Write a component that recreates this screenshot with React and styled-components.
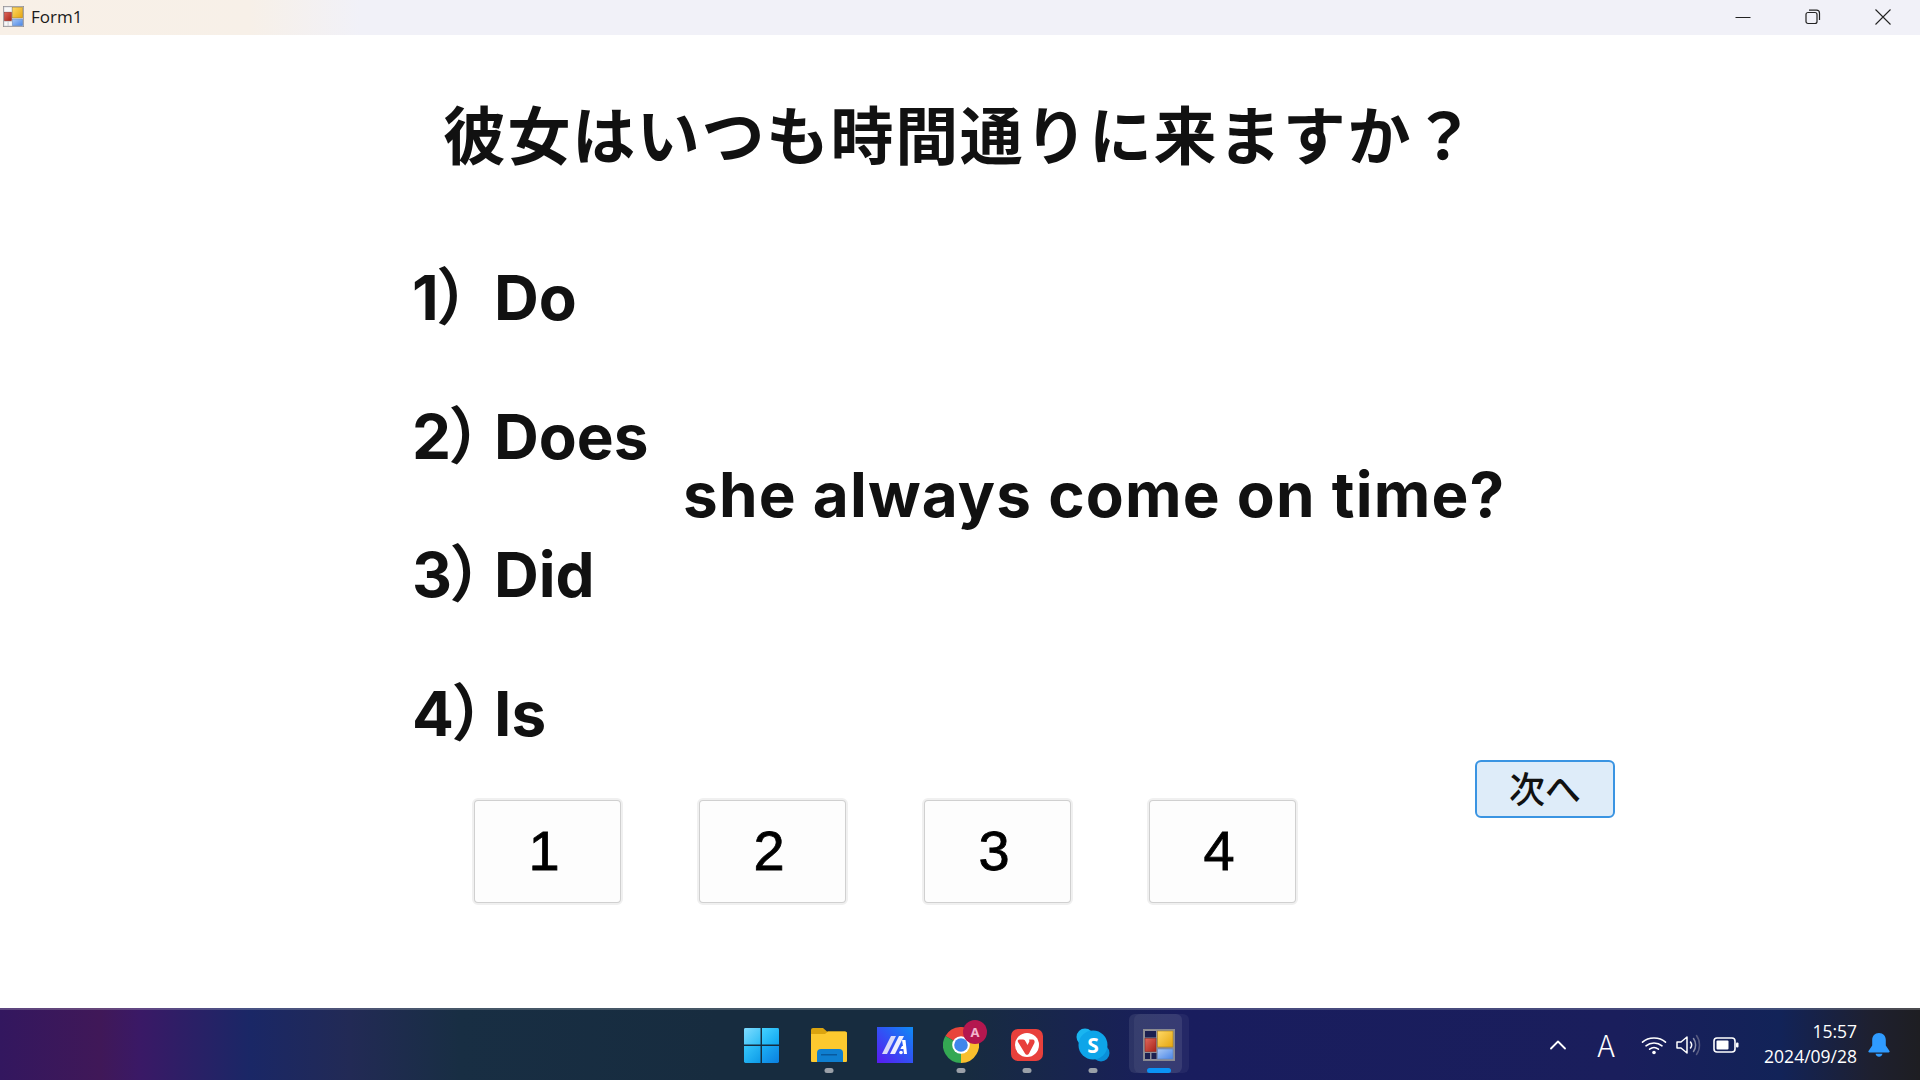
import React from "react"
import styled, { createGlobalStyle } from "styled-components"

const GlobalStyle = createGlobalStyle`
  html, body {
    margin: 0;
    padding: 0;
    background: #fff;
  }
  body {
    font-family: "Noto Sans CJK JP", "Noto Sans", sans-serif;
    overflow: hidden;
  }
`

const Screen = styled.div`
  width: 1920px;
  height: 1080px;
  display: flex;
  flex-direction: column;
  overflow: hidden;
`

const TitleBar = styled.div`
  height: 35px;
  flex: none;
  box-sizing: border-box;
  padding: 0 0 2px 3px;
  display: flex;
  align-items: center;
  background: linear-gradient(90deg, #f8f0e7 0, #f7f0e8 250px, #f1f1f8 360px, #f1f1f8 100%);
`
const TitleText = styled.span`
  margin-left: 7px;
  font-family: "Open Sans", sans-serif;
  font-size: 17px;
  color: #1a1a1a;
`
const WindowControls = styled.div`
  margin-left: auto;
  display: flex;
  align-items: center;
  padding-right: 2px;
`
const ControlButton = styled.div`
  width: 70px;
  height: 33px;
  display: flex;
  align-items: center;
  justify-content: center;
`

const FormBody = styled.main`
  flex: 1;
  display: flex;
  flex-direction: column;
  background: #fff;
  color: #111;
`
const Question = styled.h1`
  margin: 47px 0 0 443px;
  height: 100px;
  font-size: 63px;
  line-height: 100px;
  letter-spacing: 1.6px;
  font-weight: 700;
  white-space: nowrap;
`
const QuestionArea = styled.div`
  margin: 76px 0 0 412px;
  display: flex;
  align-items: center;
`
const OptionList = styled.ol`
  list-style: none;
  margin: 0;
  padding: 0;
  width: 271px;
  display: flex;
  flex-direction: column;
  gap: 58.5px;
`
const Option = styled.li`
  height: 80px;
  font-family: "Inter", "Noto Sans CJK JP", sans-serif;
  font-size: 62px;
  line-height: 80px;
  font-weight: 700;
  white-space: nowrap;
`
const Paren = styled.span`
  display: inline-block;
  width: 82px;
  font-feature-settings: "palt";
`
const Sentence = styled.div`
  margin-bottom: 22px;
  font-family: "Inter", sans-serif;
  font-size: 62px;
  font-weight: 700;
  line-height: 80px;
  letter-spacing: 1.2px;
  white-space: nowrap;
`
const ButtonRow = styled.div`
  margin: 6px 0 0 473px;
  display: flex;
  align-items: flex-start;
`
const AnswerButton = styled.button`
  width: 149px;
  height: 105px;
  margin: 39px 76px 0 0;
  padding: 0 7px 2px 0;
  box-sizing: border-box;
  border: 2px solid #d0d0d0;
  border-radius: 5px;
  outline: 2px solid #f0f0f0;
  outline-offset: -1px;
  background: #fdfdfd;
  font-family: "Liberation Sans", sans-serif;
  font-size: 56px;
  -webkit-text-stroke: 0.8px #000;
  color: #000;
`
const NextButton = styled.button`
  width: 140px;
  height: 58px;
  margin-left: 102px;
  padding: 0 0 4px;
  box-sizing: border-box;
  border: 2px solid #3a94e2;
  border-radius: 6px;
  background: #deecf9;
  font-family: "Noto Sans CJK JP", sans-serif;
  font-size: 36px;
  font-weight: 500;
  line-height: 1;
  color: #111;
`

const Taskbar = styled.footer`
  height: 72px;
  flex: none;
  box-sizing: border-box;
  border-top: 2px solid rgba(255, 255, 255, 0.2);
  display: grid;
  grid-template-columns: 1fr auto 1fr;
  align-items: center;
  color: #fff;
  background: linear-gradient(
    90deg,
    #33175f 0,
    #401858 100px,
    #3a1966 140px,
    #1a2766 250px,
    #222a55 350px,
    #182e43 460px,
    #172c3f 720px,
    #172c3f 960px,
    #191d5e 1180px,
    #1a1e5c 1620px,
    #122358 1780px,
    #1e2030 1870px,
    #1e1e22 100%
  );
`
const TaskIcons = styled.div`
  grid-column: 2;
  display: flex;
  margin-left: 2px;
`
const TaskItem = styled.div`
  position: relative;
  width: 66px;
  height: 70px;
  display: flex;
  align-items: center;
  justify-content: center;
  ${p => p.$active && `
    &::before {
      content: "";
      position: absolute;
      left: 8px;
      top: 4px;
      width: 55px;
      height: 59px;
      border-radius: 6px;
      background: rgba(255, 255, 255, 0.05);
    }
    &::after {
      content: "";
      position: absolute;
      left: 3px;
      top: 4px;
      width: 53px;
      height: 59px;
      border-radius: 6px;
      background: rgba(255, 255, 255, 0.09);
    }
  `}
  & > svg {
    position: relative;
    z-index: 1;
  }
`
const Indicator = styled.span`
  position: absolute;
  z-index: 1;
  bottom: 7px;
  left: 50%;
  height: 5px;
  width: ${p => (p.$active ? "24px" : "9px")};
  transform: translateX(-50%);
  border-radius: 3px;
  background: ${p => (p.$active ? "#0b93f6" : "#9aa0a8")};
`
const Badge = styled.span`
  position: absolute;
  z-index: 2;
  left: 35px;
  top: 10px;
  width: 24px;
  height: 24px;
  border-radius: 50%;
  background: #b4174f;
  color: #f3b4cc;
  font-family: "Noto Sans", sans-serif;
  font-size: 13px;
  font-weight: 700;
  line-height: 24px;
  text-align: center;
`
const Tray = styled.div`
  grid-column: 3;
  display: flex;
  align-items: center;
  justify-content: flex-end;
  padding-right: 30px;
`
const TraySlot = styled.div`
  width: ${p => p.$width}px;
  display: flex;
  align-items: center;
  justify-content: center;
`
const ImeGlyph = styled.span`
  padding-bottom: 3px;
  font-family: "Noto Sans CJK JP", sans-serif;
  font-weight: 200;
  font-size: 30px;
  line-height: 36px;
`
const Clock = styled.div`
  margin: 0 11px 2px 21px;
  font-family: "Open Sans", sans-serif;
  font-size: 17.5px;
  line-height: 25px;
  text-align: right;
  white-space: nowrap;
`
const StartSvg = styled.svg`
  margin-right: 3px;
`

const FormIcon = ({ size = 20, cell = "#f8f8f8", frame = "#c9c9cf" }) => (
  <svg width={size} height={size} viewBox="0 0 32 32">
    <rect x="0.5" y="0.5" width="31" height="31" fill={frame} stroke="#8a8a90" />
    <rect x="2" y="2" width="11" height="6.500" fill={cell} />
    <rect x="2" y="9.500" width="11" height="13" fill="url(#formRed)" stroke="#8f2a22" strokeWidth="0.6" />
    <rect x="2" y="24" width="5" height="6" fill={cell} />
    <rect x="8.500" y="24" width="5" height="6" fill={cell} />
    <rect x="14.500" y="2" width="15.500" height="16" fill="url(#formGold)" stroke="#a9811c" strokeWidth="0.6" />
    <rect x="14.500" y="20" width="15.500" height="10" fill="url(#formBlue)" stroke="#5f83b8" strokeWidth="0.6" />
    <defs>
      <linearGradient id="formRed" x1="0" y1="0" x2="1" y2="1">
        <stop offset="0" stopColor="#e0675c" />
        <stop offset="1" stopColor="#a82418" />
      </linearGradient>
      <linearGradient id="formGold" x1="0" y1="0" x2="1" y2="1">
        <stop offset="0" stopColor="#ffd966" />
        <stop offset="1" stopColor="#e5a50f" />
      </linearGradient>
      <linearGradient id="formBlue" x1="0" y1="0" x2="1" y2="1">
        <stop offset="0" stopColor="#a8c8f4" />
        <stop offset="1" stopColor="#4a86e8" />
      </linearGradient>
    </defs>
  </svg>
)

const WindowsIcon = () => (
  <StartSvg width="35" height="35" viewBox="0 0 36 36">
    <defs>
      <linearGradient id="winA" x1="0" y1="0" x2="1" y2="1">
        <stop offset="0" stopColor="#7fdcff" />
        <stop offset="1" stopColor="#2cbcf5" />
      </linearGradient>
      <linearGradient id="winB" x1="0" y1="0" x2="1" y2="1">
        <stop offset="0" stopColor="#44d2ff" />
        <stop offset="1" stopColor="#0ea5f0" />
      </linearGradient>
      <linearGradient id="winC" x1="0" y1="0" x2="1" y2="1">
        <stop offset="0" stopColor="#36c6fa" />
        <stop offset="1" stopColor="#0c9ae8" />
      </linearGradient>
      <linearGradient id="winD" x1="0" y1="0" x2="1" y2="1">
        <stop offset="0" stopColor="#1cb0f6" />
        <stop offset="1" stopColor="#0a7fe0" />
      </linearGradient>
    </defs>
    <path d="M1.500 0H17v17H0V1.500A1.500 1.500 0 0 1 1.500 0Z" fill="url(#winA)" />
    <path d="M18.500 0h16A1.500 1.500 0 0 1 36 1.500V17H18.500Z" fill="url(#winB)" />
    <path d="M0 18.500h17V36H1.500A1.500 1.500 0 0 1 0 34.500Z" fill="url(#winC)" />
    <path d="M18.500 18.500H36v16A1.500 1.500 0 0 1 34.500 36h-16Z" fill="url(#winD)" />
  </StartSvg>
)

const FolderIcon = () => (
  <svg width="36" height="34" viewBox="0 0 36 34">
    <path d="M0 2a2 2 0 0 1 2-2h10l4 3.500h18a2 2 0 0 1 2 2V10H0Z" fill="#dba40f" />
    <path d="M0 6h14l3-2.500h17a2 2 0 0 1 2 2V33a1 1 0 0 1-1 1H1a1 1 0 0 1-1-1Z" fill="#fcc92f" />
    <path d="M6 34v-9a4 4 0 0 1 4-4h18a4 4 0 0 1 4 4v9Z" fill="#0f7fd0" />
    <rect x="10" y="26" width="16" height="1.500" fill="#085a9e" />
  </svg>
)

const MaIcon = () => (
  <svg width="36" height="36" viewBox="0 0 36 36">
    <defs>
      <linearGradient id="maBg" x1="0" y1="1" x2="1" y2="0">
        <stop offset="0" stopColor="#5a1af0" />
        <stop offset="0.6" stopColor="#2a5cf5" />
        <stop offset="1" stopColor="#0f8cf5" />
      </linearGradient>
    </defs>
    <rect width="36" height="36" fill="url(#maBg)" />
    <path d="M5 27 14 9h5L10 27Z" fill="#d8d8f8" />
    <path d="M13 27 22 9h5L18 27Z" fill="#eeeefe" />
    <path d="M25 13h3.500L30 27h-3l-.6-5h-3l1.600-3h1Z" fill="#ffffff" />
    <circle cx="24" cy="25.500" r="1.800" fill="#ffffff" />
  </svg>
)

const ChromeIcon = () => (
  <svg width="36" height="36" viewBox="0 0 36 36">
    <path d="M18 18 2.400 9A18 18 0 0 1 33.600 9Z" fill="#e8453a" />
    <path d="M18 18 2.400 9A18 18 0 0 0 18 36Z" fill="#34a853" />
    <path d="M18 18 33.600 9A18 18 0 0 1 18 36Z" fill="#f9bf2d" />
    <circle cx="18" cy="18" r="8.800" fill="#ffffff" />
    <circle cx="18" cy="18" r="6.800" fill="#3f86ec" />
  </svg>
)

const VivaldiIcon = () => (
  <svg width="32" height="32" viewBox="0 0 32 32">
    <rect width="32" height="32" rx="7" fill="#e8403c" />
    <circle cx="16" cy="16" r="12" fill="#ffffff" />
    <path d="M8.500 10.500h3.500c1.400 0 2 .9 2.600 2l1.900 3.600 1.600-3c.5-1 .2-1.500 0-2.600h3.400c2 0 2.600 2.200 1.800 3.700L18 24.500c-1 1.800-3 1.800-4 0L7 13c-.8-1.300 0-2.500 1.500-2.500Z" fill="#e8403c" />
  </svg>
)

const SkypeIcon = () => (
  <svg width="34" height="34" viewBox="0 0 34 34">
    <circle cx="9" cy="9" r="8.500" fill="#19b5f0" />
    <circle cx="25" cy="25" r="8.500" fill="#0a8fd8" />
    <circle cx="17" cy="17" r="14.500" fill="#0ea5e9" />
    <text x="17" y="24.500" textAnchor="middle" fontFamily="Noto Sans, sans-serif" fontWeight="700" fontSize="21" fill="#ffffff">S</text>
  </svg>
)

const WifiIcon = () => (
  <svg width="26" height="20" viewBox="0 0 26 20" fill="none" stroke="#fff" strokeWidth="1.600" strokeLinecap="round">
    <path d="M1.500 7.200C7.500 1.600 18.500 1.600 24.500 7.200" />
    <path d="M5 10.800c4.500-3.800 11.500-3.800 16 0" />
    <path d="M8.600 14.200c2.600-2 6.200-2 8.800 0" />
    <circle cx="13" cy="17.500" r="1.800" fill="#fff" stroke="none" />
  </svg>
)

const SpeakerIcon = () => (
  <svg width="26" height="22" viewBox="0 0 26 22" fill="none" stroke="#fff" strokeWidth="1.500" strokeLinejoin="round" strokeLinecap="round">
    <path d="M1 8v6h4l6 5V3L5 8Z" />
    <path d="M14.500 8c1.400 1.800 1.400 4.200 0 6" />
    <path d="M17.500 4.500c2.800 3.700 2.800 9.300 0 13" stroke="#8b8fa8" />
    <path d="M20.500 1.500c4 5.500 4 13.500 0 19" stroke="#565a80" />
  </svg>
)

const BatteryIcon = () => (
  <svg width="26" height="18" viewBox="0 0 26 18">
    <rect x="1" y="2" width="21" height="14" rx="3" fill="none" stroke="#fff" strokeWidth="1.600" />
    <rect x="3.500" y="4.500" width="12" height="9" rx="1" fill="#fff" />
    <rect x="23" y="6.500" width="2.500" height="5" rx="1" fill="#fff" />
  </svg>
)

const BellIcon = () => (
  <svg width="22" height="24" viewBox="0 0 22 24" fill="#2f9bff">
    <path d="M11 0c4.200 0 6.800 3 6.800 7v5.500L21.500 18c.4.700 0 1.500-.9 1.500H1.400c-.9 0-1.300-.8-.9-1.500l3.700-5.500V7C4.200 3 6.800 0 11 0Z" />
    <path d="M7.500 20.800h7c-.5 1.900-1.800 3-3.500 3s-3-1.100-3.500-3Z" />
  </svg>
)

const taskApps = [
  { key: "start", icon: <WindowsIcon /> },
  { key: "files", icon: <FolderIcon />, running: true },
  { key: "ma", icon: <MaIcon /> },
  { key: "chrome", icon: <ChromeIcon />, running: true, badge: "A" },
  { key: "vivaldi", icon: <VivaldiIcon />, running: true },
  { key: "skype", icon: <SkypeIcon />, running: true },
  { key: "form", icon: <FormIcon size={32} cell="#1b2050" frame="#8f8f98" />, active: true },
]

const options = ["Do", "Does", "Did", "Is"]

export default function App() {
  return (
    <Screen>
      <GlobalStyle />
      <TitleBar>
        <FormIcon size={21} />
        <TitleText>Form1</TitleText>
        <WindowControls>
          <ControlButton>
            <svg width="16" height="16" viewBox="0 0 16 16" stroke="#222" strokeWidth="1">
              <path d="M0.500 8.500H15.500" />
            </svg>
          </ControlButton>
          <ControlButton>
            <svg width="16" height="16" viewBox="0 0 16 16" fill="none" stroke="#222" strokeWidth="1.200">
              <rect x="1" y="3.500" width="11" height="11" rx="2" />
              <path d="M4 1.200h7.500a3 3 0 0 1 3 3V11" />
            </svg>
          </ControlButton>
          <ControlButton>
            <svg width="16" height="16" viewBox="0 0 16 16" stroke="#222" strokeWidth="1.100">
              <path d="M0.500 0.500 15.500 15.500M15.500 0.500 0.500 15.500" />
            </svg>
          </ControlButton>
        </WindowControls>
      </TitleBar>

      <FormBody>
        <Question lang="ja">彼女はいつも時間通りに来ますか？</Question>
        <QuestionArea>
          <OptionList>
            {options.map((word, i) => (
              <Option key={word}>
                <Paren>{i + 1}）</Paren>
                {word}
              </Option>
            ))}
          </OptionList>
          <Sentence>she always come on time?</Sentence>
        </QuestionArea>
        <ButtonRow>
          {[1, 2, 3, 4].map(n => (
            <AnswerButton key={n}>{n}</AnswerButton>
          ))}
          <NextButton lang="ja">次へ</NextButton>
        </ButtonRow>
      </FormBody>

      <Taskbar>
        <TaskIcons>
          {taskApps.map(app => (
            <TaskItem key={app.key} $active={app.active}>
              {app.icon}
              {app.badge && <Badge>{app.badge}</Badge>}
              {(app.running || app.active) && <Indicator $active={app.active} />}
            </TaskItem>
          ))}
        </TaskIcons>
        <Tray>
          <TraySlot $width={30}>
            <svg width="16" height="10" viewBox="0 0 16 10" fill="none" stroke="#fff" strokeWidth="1.800" strokeLinecap="round" strokeLinejoin="round">
              <path d="M1 8.500 8 1.500l7 7" />
            </svg>
          </TraySlot>
          <TraySlot $width={66}>
            <ImeGlyph>A</ImeGlyph>
          </TraySlot>
          <TraySlot $width={30}>
            <WifiIcon />
          </TraySlot>
          <TraySlot $width={40}>
            <SpeakerIcon />
          </TraySlot>
          <TraySlot $width={34}>
            <BatteryIcon />
          </TraySlot>
          <Clock>
            15:57
            <br />
            2024/09/28
          </Clock>
          <BellIcon />
        </Tray>
      </Taskbar>
    </Screen>
  )
}
